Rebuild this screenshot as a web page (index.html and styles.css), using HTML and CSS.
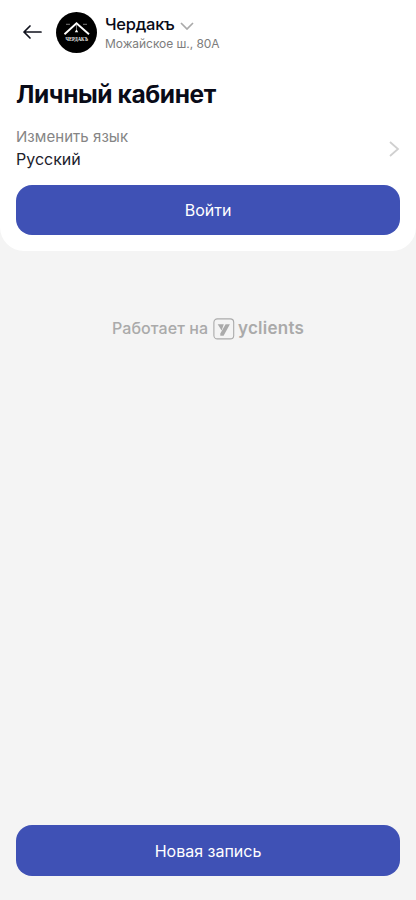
FILE: index.html
```html
<!DOCTYPE html>
<html lang="ru">
<head>
<meta charset="utf-8">
<meta name="viewport" content="width=device-width, initial-scale=1">
<title>Личный кабинет</title>
<link rel="stylesheet" href="styles.css">
</head>
<body>
<main class="card">
  <header class="header">
    <svg class="back" width="20" height="16" viewBox="0 0 20 16"><path d="M8 2 2 8l6 6M2 8h17"/></svg>
    <svg class="logo" width="41" height="41" viewBox="0 0 41 41">
      <circle cx="20.5" cy="20.5" r="20.5" fill="#000"/>
      <path class="roof" d="M8.5 22.3 20.5 11.3 33 22.3"/>
      <path class="rays" d="M10 12.3h4M27 12.3h4M20.5 12.5v5"/>
      <path d="m18.8 20.3 1.7-3 1.7 3z" fill="#fff"/>
      <text x="20.8" y="28.7" textLength="22.5" lengthAdjust="spacingAndGlyphs">ЧЕРДАКЪ</text>
    </svg>
    <div class="place">
      <div class="name"><span>Чердакъ</span><svg width="14" height="8" viewBox="0 0 14 8"><path d="m1 1 6 6 6-6"/></svg></div>
      <div class="address">Можайское ш., 80А</div>
    </div>
  </header>
  <h1 class="title">Личный кабинет</h1>
  <section class="language">
    <div><div class="label">Изменить язык</div><div class="value">Русский</div></div>
    <svg width="11" height="16" viewBox="0 0 11 16"><path d="m1 1 8 7-8 7"/></svg>
  </section>
  <button class="button">Войти</button>
</main>
<div class="powered">
  <span class="works">Работает на</span>
  <svg width="22" height="22" viewBox="0 0 22 22"><rect x=".9" y=".9" width="19.8" height="20" rx="3.5"/><path d="M4.7 6.2h6.1L8.6 12.6zM12.6 6.2h4.3L10.6 17.8H7.3V15.4z"/></svg>
  <span class="brand">yclients</span>
</div>
<footer class="footer"><button class="button">Новая запись</button></footer>
</body>
</html>
```
FILE: styles.css
```css
* { box-sizing: border-box; }
body {
  margin: 0;
  height: 100vh;
  display: flex;
  flex-direction: column;
  background: #f4f4f4;
  color: #090b18;
  font-family: Inter, "Liberation Sans", sans-serif;
}
svg { display: block; flex: none; fill: none; }
.card {
  height: 251px;
  padding: 12px 16px 16px;
  background: #fff;
  border-radius: 0 0 24px 24px;
}
.header { display: flex; height: 41px; padding-left: 6px; }
.back { margin: 12px 14px 0 0; stroke: #10121d; stroke-width: 1.7; stroke-linecap: round; stroke-linejoin: round; }
.logo { margin-right: 8px; }
.roof { stroke: #fff; stroke-width: 1.9; }
.rays { stroke: #aaa; stroke-width: .7; }
.logo text { fill: #eee; font: bold 6.6px "Liberation Serif", serif; text-anchor: middle; }
.name { display: flex; align-items: center; gap: 5px; height: 24px; font-size: 16.5px; font-weight: 500; letter-spacing: -.25px; }
.name svg { stroke: #aaa; stroke-width: 1.7; margin-top: 4px; }
.address { font-size: 12px; line-height: 16px; color: #7d7d7d; letter-spacing: -.05px; }
.title { margin: 25px 0 0; font-size: 24.5px; line-height: 33px; font-weight: 700; letter-spacing: -.4px; white-space: nowrap; }
.language { display: flex; align-items: center; justify-content: space-between; height: 46px; margin-top: 14px; font-size: 16px; line-height: 23px; }
.label { font-size: 15px; color: #858585; letter-spacing: .05px; }
.value { color: #20212b; }
.language svg { stroke: #d0d0d0; stroke-width: 1.8; margin-top: 2px; }
.button {
  display: block;
  width: 384px;
  height: 50px;
  border: 0;
  border-radius: 16px;
  padding: 0;
  background: #3f51b5;
  color: #fff;
  font: 400 16px/20px Inter, sans-serif;
}
.card .button { margin-top: 14px; }
.powered { display: flex; align-items: center; height: 22px; margin: 67px 0 0 112px; color: #aaa; }
.works { font-size: 16px; font-weight: 500; width: 101px; white-space: nowrap; margin-top: -2px; letter-spacing: .08px; }
.powered rect { stroke: #aaa; stroke-width: 1.1; }
.powered path { fill: #aaa; }
.brand { margin: -3px 0 0 3px; font: 600 17px/20px Inter, sans-serif; letter-spacing: .25px; }
.footer { margin-top: auto; padding: 0 16px 24px; }
.footer .button { height: 51px; }
```
